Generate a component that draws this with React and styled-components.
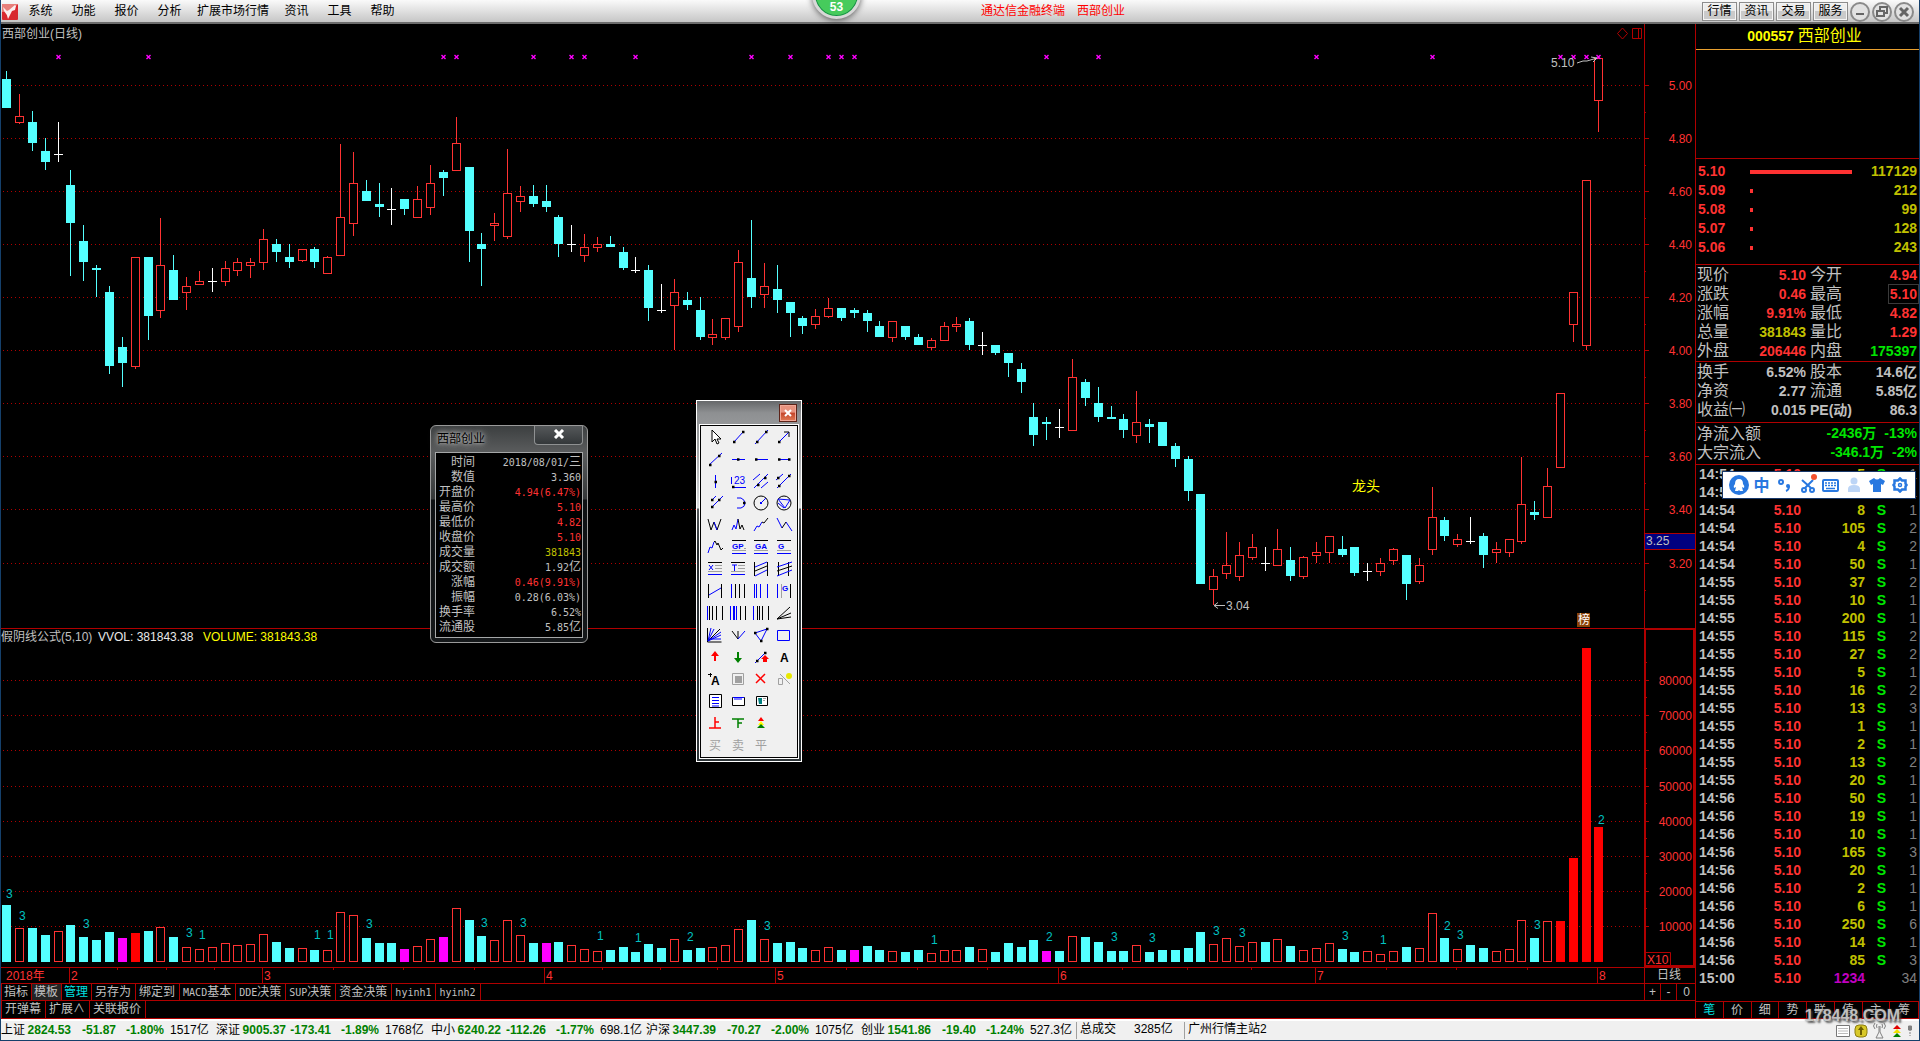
import React from 'react'
import styled, { createGlobalStyle } from 'styled-components';

const RED = '#ff3232';
const LINE = '#b00000';
const CYAN = '#54ffff';
const GREY = '#c0c0c0';

const GlobalStyle = createGlobalStyle`
    body {
        margin: 0;
        background: #000;
        color: #c0c0c0;
        font-family: "Liberation Sans", "Noto Sans CJK SC", sans-serif;
        font-size: 12px;
        line-height: 15px;
        overflow: hidden;
    }

    * {
        box-sizing: border-box;
    }

    button {
        font: inherit;
        color: inherit;
        padding: 0;
        border: 0;
        background: none;
        white-space: nowrap;
    }

    table {
        border-collapse: collapse;
        table-layout: fixed;
        width: 100%;
    }

    td, th {
        padding: 0;
        font-weight: inherit;
        white-space: nowrap;
    }
`;

const Screen = styled.div`
    position: relative;
    min-height: 100vh;
    display: flex;
    flex-direction: column;
    border: solid #15406b;
    border-width: 0 1px 1px;
`;

/* ---------- top bar ---------- */

const TopBar = styled.header`
    position: relative;
    display: flex;
    align-items: center;
    height: 24px;
    padding-top: 1px;
    color: #000;
    background: linear-gradient(#fafafa, #c6c6c6);
    border-bottom: 2px solid #6c6c6c;
`;

const Logo = styled.svg`
    width: 16px;
    height: 16px;
    margin: 0 1px;
`;

const Menu = styled.nav`
    display: flex;
`;

const MenuItem = styled.button`
    min-width: 43px;
    padding: 0 6px;
    height: 20px;
`;

const Caption = styled.div`
    display: flex;
    justify-content: center;
    gap: 12px;
    flex: 1;
    color: #f00;
`;

const TopButtons = styled.div`
    display: flex;
    align-items: center;
    gap: 2px;
    padding-right: 5px;
`;

const TopButton = styled.button`
    width: 35px;
    height: 19px;
    border: 1px solid #8c8c8c;
    box-shadow: inset 0 0 0 1px #f4f4f4;
    background: linear-gradient(#ededed 50%, #cacaca 50%);
`;

const RoundButton = styled.button`
    width: 20px;
    height: 20px;
    display: flex;
    border-radius: 50%;
    border: 2px solid #8a8a8a;
    background: #e2e2e2;
`;

const Badge = styled.div`
    position: absolute;
    left: 811px;
    top: -30px;
    width: 49px;
    height: 49px;
    padding-top: 28px;
    border-radius: 50%;
    border: 3px solid #d8d8d8;
    background: #46cb5c;
    box-shadow: inset 0 0 0 1px #178a48, 0 1px 6px rgba(0, 0, 0, .6);
    color: #fff;
    font-weight: bold;
    line-height: 13px;
    text-align: center;
`;

/* ---------- chart side ---------- */

const Main = styled.main`
    display: flex;
`;

const ChartSide = styled.section`
    flex: 1;
    min-width: 0;
`;

const ChartRow = styled.div`
    display: flex;
    height: ${props => props.$height}px;
    border-bottom: 1px solid ${LINE};
`;

const Plot = styled.svg`
    flex: 1;
    min-width: 0;
    height: 100%;
    display: block;
    font-size: 12px;
`;

const Axis = styled.svg`
    width: 51px;
    height: 100%;
    display: block;
    font-size: 12px;
`;

const Period = styled.div`
    width: 51px;
    padding-left: 12px;
    border-left: 1px solid ${LINE};
`;

const Tabs = styled.div`
    display: flex;
    flex: 1;
`;

const Tab = styled.button`
    display: flex;
    align-items: center;
    justify-content: center;
    padding: 0 ${props => props.$tight ? '3px 0 2px' : '4px 0 3px'};
    border-right: 1px solid ${LINE};
    color: ${props => props.$active ? '#00e0e0' : GREY};
    background: ${props => props.$pressed ? '#242424' : 'none'};

    &:first-child {
        border-left: 1px solid ${LINE};
    }
`;

const Half = styled.span`
    font-family: "DejaVu Sans Mono", monospace;
    font-size: 10px;
`;

const Zoomers = styled.div`
    display: grid;
    grid-template-columns: 16px 16px 19px;
    border-left: 1px solid ${LINE};
    width: 51px;
`;

const ZoomButton = styled.button`
    &:not(:last-child) {
        border-right: 1px solid ${LINE};
    }
`;

/* ---------- quote side ---------- */

const QuoteSide = styled.aside`
    width: 224px;
    display: flex;
    flex-direction: column;
    border-left: 1px solid ${LINE};
    font-size: 14px;
    font-weight: bold;
    line-height: 19px;
`;

const StockTitle = styled.h1`
    margin: 0;
    height: 26px;
    padding-right: 6px;
    border-bottom: 1px solid #e8a030;
    color: #ff0;
    text-align: center;
    font-size: 14px;
    line-height: 25px;
`;

const Name = styled.span`
    font-size: 16px;
    font-weight: normal;
    line-height: 16px;
    color: ${props => props.$color || GREY};
`;

const Block = styled.div`
    height: ${props => props.$height}px;
    padding: ${props => props.$top || 1}px 2px 0 1px;
    border-bottom: 1px solid ${LINE};
`;

const Row = styled.tr`
    height: ${props => props.$height || 19}px;
    line-height: ${props => props.$height || 19}px;
`;

const Cell = styled.td`
    color: ${props => props.$color || GREY};
    text-align: ${props => props.$left ? 'left' : 'right'};
    padding-left: ${props => props.$pad || 0}px;
    font-weight: ${props => props.$thin ? 'normal' : 'inherit'};
`;

const Depth = styled.div`
    height: 4px;
    background: ${RED};
`;

const Boxed = styled.span`
    outline: 1px solid #3a3a3a;
    outline-offset: 1px;
`;

const Flow = styled.div`
    display: flex;
    gap: 8px;
    height: 19px;
    color: #00e600;
`;

const FlowName = styled(Name)`
    flex: 1;
    line-height: 19px;
`;

const TickList = styled.div`
    flex: 1;
    padding: 0 2px 0 3px;
`;

const SideTabs = styled.div`
    display: grid;
    grid-template-columns: repeat(8, 1fr);
    height: 18px;
    border: solid ${LINE};
    border-width: 1px 1px 1px 0;
    font-size: 12px;
    font-weight: normal;
    line-height: 16px;
`;

const SideTab = styled.button`
    color: ${props => props.$active ? '#00e0e0' : GREY};

    &:not(:last-child) {
        border-right: 1px solid ${LINE};
    }
`;

/* ---------- status bar ---------- */

const StatusBar = styled.footer`
    display: flex;
    align-items: center;
    flex: 1;
    min-height: 21px;
    color: #000;
    background: #f0f0f0;
    border-top: 2px solid #fff;
`;

const IndexQuote = styled.div`
    display: grid;
    grid-template-columns: 25px 45px 45px 48px 52px;
`;

const Fall = styled.b`
    color: #008000;
    text-align: right;
`;

const Amount = styled.span`
    padding-left: 6px;
`;

const StatusCell = styled.div`
    display: flex;
    gap: 18px;
    height: 17px;
    width: ${props => props.$width}px;
    padding-left: 3px;
    border-left: 1px solid #a0a0a0;
    white-space: nowrap;
`;

const StatusIcons = styled.svg`
    width: 84px;
    height: 18px;
    margin-left: auto;
`;

const Watermark = styled.div`
    position: absolute;
    right: 19px;
    bottom: 14px;
    color: rgba(215, 215, 215, .85);
    font-size: 16px;
    font-weight: bold;
    line-height: 20px;
    text-shadow: 2px 2px 2px rgba(60, 60, 60, .8), 0 0 2px #555;
`;

/* ---------- floating windows ---------- */

const InfoWindow = styled.section`
    position: absolute;
    left: 429px;
    top: 425px;
    width: 158px;
    padding: 0 4px 4px;
    border: 1px solid #9a9a9a;
    border-radius: 6px;
    background: linear-gradient(#3c3f40, #5a5c5d 26px, #353839 73px, #0e1113 74px, #15181a);
`;

const InfoHead = styled.div`
    display: flex;
    justify-content: space-between;
    height: 26px;
    color: #000;
`;

const InfoTitle = styled.span`
    padding: 6px 2px;
    text-shadow: 0 0 3px #aaa, 0 0 5px #aaa, 0 0 8px #999, 0 0 10px #888;
`;

const InfoClose = styled.button`
    width: 49px;
    height: 19px;
    border: 1px solid #8f9192;
    border-top: 0;
    border-radius: 0 0 4px 4px;
    background: linear-gradient(#55585a, #34383a);
`;

const InfoBody = styled.div`
    padding: 2px 1px 2px 2px;
    border: 1px solid #a5a7a8;
    background: #000;
`;

const Tools = styled.section`
    position: absolute;
    left: 695px;
    top: 400px;
    width: 106px;
    padding: 0 3px 3px;
    border: 1px solid #fff;
    background: linear-gradient(#66686a, #8e9092 12px, #a3a5a7 50px, #dadcde 107px, #55595c 108px, #2c3236 150px, #2f3639);
`;

const ToolsHead = styled.div`
    display: flex;
    justify-content: flex-end;
    height: 24px;
    padding: 3px 1px 0 0;
`;

const ToolsClose = styled.button`
    width: 18px;
    height: 18px;
    display: flex;
    align-items: center;
    justify-content: center;
    border: 1px solid #5c2318;
    box-shadow: inset 0 0 0 1px #f0a898;
    background: linear-gradient(#e8927e 45%, #c4452a 50%, #e07a55);
`;

const ToolGrid = styled.div`
    display: grid;
    grid-template-columns: repeat(4, 23px);
    grid-auto-rows: 22px;
    padding: 0 0 1px 3px;
    border: 1px solid #000;
    outline: 1px solid #fff;
    background: #f0f0f0;
`;

const Tool = styled.button`
    display: flex;
`;

const ImeBar = styled.section`
    position: absolute;
    right: 3px;
    top: 471px;
    display: flex;
    align-items: center;
    height: 28px;
    padding: 0 4px;
    border: 1px solid #17386b;
    background: #fff;
`;

const ImeButton = styled.button`
    width: 23px;
    height: 22px;
    display: flex;
    align-items: center;
    justify-content: center;
    color: #2878e0;
    font-size: 16px;
    font-weight: bold;
`;

/* kind, high, body top, body bottom, low, volume kind, volume top
   kinds: c down, r up, w flat, m magenta, f solid red */
const DAYS = `c 71 79 108 108 c 905
r 94 116 123 124 r 928
c 111 122 143 151 c 928
c 138 151 162 170 c 935
w 122 154 155 162 r 931
c 170 185 223 276 c 925
c 225 241 262 281 c 937
c 265 268 270 297 c 940
c 286 292 366 374 c 932
c 337 347 363 387 m 938
r 257 257 367 369 f 933
c 257 257 316 340 c 931
r 218 265 311 318 r 927
c 255 270 300 300 c 937
r 277 286 293 310 r 947
r 271 281 285 285 r 949
w 268 281 282 292 r 947
r 261 268 282 286 r 943
r 258 262 271 276 r 945
r 258 262 266 278 r 944
r 229 239 263 270 r 934
c 239 244 252 262 c 942
c 244 257 262 268 c 948
r 249 249 261 262 r 948
c 247 249 262 268 c 950
r 256 257 274 274 r 950
r 144 217 256 256 r 912
r 152 183 224 236 r 915
c 180 191 201 201 c 938
c 183 204 207 217 c 943
w 188 209 210 225 c 943
c 199 199 209 215 m 949
r 186 199 218 218 r 946
r 165 183 208 215 r 939
c 170 172 178 196 m 937
r 117 143 171 171 r 908
c 167 167 231 262 c 920
c 233 244 249 286 c 936
r 213 223 226 241 r 940
r 149 193 237 239 r 920
r 186 196 202 212 r 935
c 185 196 204 207 c 943
c 185 201 207 212 m 943
c 215 217 244 257 c 942
w 225 244 245 252 r 945
r 234 247 256 262 r 949
r 237 244 248 252 r 951
c 236 244 247 247 c 950
c 247 252 268 270 c 947
w 257 270 271 273 c 952
c 265 270 308 321 c 944
w 284 310 311 313 c 948
r 279 292 306 350 r 939
c 292 300 305 310 c 950
c 297 310 337 340 c 948
r 319 334 338 345 r 947
r 318 318 338 340 r 945
r 250 262 327 332 r 929
c 220 278 297 308 c 920
r 263 286 295 308 r 939
c 265 289 300 313 c 943
c 302 302 313 337 c 942
c 316 318 326 334 c 948
r 309 316 325 329 r 950
r 298 308 317 318 r 947
c 308 308 318 321 c 950
c 308 310 313 318 m 950
c 310 313 321 332 c 946
c 321 326 337 337 c 950
r 321 321 338 342 r 951
c 326 326 337 340 c 952
c 334 337 345 345 c 950
r 338 340 348 350 r 953
r 322 326 341 341 r 950
r 317 324 327 332 r 950
c 318 321 345 350 c 947
w 332 345 346 355 r 949
c 345 345 353 355 c 952
c 353 353 363 377 c 943
c 363 369 382 393 c 947
c 403 417 435 446 c 940
c 417 422 424 440 m 951
w 409 427 428 438 c 951
r 359 377 431 431 r 936
c 379 382 398 406 c 937
c 387 403 417 422 c 942
c 406 417 419 419 c 951
c 414 419 430 438 c 951
r 391 422 436 443 r 945
c 419 424 427 443 c 952
c 422 422 446 446 c 950
c 443 446 459 467 c 950
c 456 459 491 501 c 948
c 494 494 584 584 c 932
r 569 576 590 605 r 944
r 532 565 574 579 r 938
r 542 555 577 581 r 946
r 534 547 558 560 r 942
w 547 563 564 571 c 942
r 529 549 566 566 r 939
c 547 560 576 581 c 946
r 556 557 577 579 r 950
r 542 552 556 563 r 948
r 536 536 553 563 r 943
c 536 549 555 557 c 949
c 547 547 573 576 c 952
w 563 571 572 581 r 951
r 558 563 572 576 r 954
r 548 549 561 565 r 951
c 555 555 584 600 c 947
r 558 565 582 584 r 948
r 487 517 550 555 r 913
c 517 520 536 541 c 938
r 534 539 545 547 r 949
w 517 541 542 544 c 945
c 533 536 555 568 c 948
r 542 549 553 563 r 951
r 539 539 553 557 r 949
r 457 504 542 544 r 920
c 501 512 515 520 c 938
r 468 486 518 518 r 921
r 393 393 468 468 f 921
r 292 292 325 342 f 858
r 180 180 346 350 f 648
r 58 58 101 132 f 827`.split('\n').map(line => {
    const [kind, high, top, bottom, low, volKind, volTop] = line.split(' ');
    return { kind, high: +high, top: +top, bottom: +bottom, low: +low, volKind, volTop: +volTop };
});

const dayX = i => Math.floor(6.78 + 12.84 * i);

const MARKED = [4, 11, 34, 35, 41, 44, 45, 49, 58, 61, 64, 65, 66, 81, 85, 102, 111, 121, 122, 123, 124];

const COUNTS = [
    [0, 3, 894], [1, 3, 916], [6, 3, 924], [14, 3, 933], [15, 1, 935], [24, 1, 935], [25, 1, 935],
    [28, 3, 924], [37, 3, 923], [40, 3, 923], [46, 1, 936], [49, 1, 938], [53, 2, 937], [59, 3, 926],
    [72, 1, 940], [81, 2, 937], [86, 3, 937], [89, 3, 938], [94, 3, 931], [96, 3, 933], [104, 3, 936],
    [107, 1, 940], [112, 2, 926], [113, 3, 935], [119, 3, 925], [124, 2, 820],
];

const PRICES = [
    ['5.00', 85], ['4.80', 138], ['4.60', 191], ['4.40', 244], ['4.20', 297],
    ['4.00', 350], ['3.80', 403], ['3.60', 456], ['3.40', 509], ['3.20', 563],
];

const VOLUMES = [
    ['80000', 680], ['70000', 715], ['60000', 750], ['50000', 786],
    ['40000', 821], ['30000', 856], ['20000', 891], ['10000', 926],
];

const MONTHS = [['2', 69], ['3', 262], ['4', 544], ['5', 775], ['6', 1058], ['7', 1315], ['8', 1597]];
const WEEKS = [117, 166, 214, 333, 403, 474, 602, 660, 717, 846, 917, 987, 1122, 1187, 1251, 1386, 1456, 1527];

const FILL = { c: CYAN, r: RED, w: '#fff', m: '#f0f', f: '#f00' };

function Candle({ day, x }) {
    const color = FILL[day.kind];
    if (day.kind === 'r') {
        return (
            <g>
                <rect x={x} y={day.high} width="1" height={day.top - day.high} fill={color} />
                <rect x={x} y={day.bottom} width="1" height={day.low - day.bottom} fill={color} />
                <rect x={x - 3.5} y={day.top + .5} width="8" height={day.bottom - day.top - 1} fill="#000" stroke={color} />
            </g>
        )
    }
    return (
        <g fill={color}>
            <rect x={x} y={day.high} width="1" height={day.low - day.high} />
            <rect x={x - 4} y={day.top} width="9" height={day.bottom - day.top} />
        </g>
    )
}

function Grid({ levels }) {
    return levels.map(([label, y]) => (
        <line key={label} x1="3" x2="100%" y1={y + .5} y2={y + .5} stroke={LINE} strokeDasharray="1 3" />
    ))
}

function PricePlot() {
    return (
        <Plot>
            <g transform="translate(-1 -24)">
                <g shapeRendering="crispEdges">
                    <Grid levels={PRICES} />
                    {DAYS.map((day, i) => <Candle key={i} day={day} x={dayX(i)} />)}
                </g>
                {MARKED.map(i => (
                    <path key={i} d={`M${dayX(i) - 1.5} 55l4 4m0-4l-4 4`} stroke="#f0f" strokeWidth="1.4" />
                ))}
                <path d="M1622.500 28l5 5.500l-5 5.500l-5-5.500zM1632.500 28.500h9v10h-9zM1638.500 28v10" fill="none" stroke={LINE} />
                <path d="M1577 63l6-2h4l10-3m-6-1l6 1l-4 4" fill="none" stroke={GREY} />
                <path d="M1225 605.500h-11m4-3l-4 3l4 3" fill="none" stroke={GREY} />
                <rect x="1577" y="613" width="13" height="14" fill="#8a4208" />
                <g fill={GREY}>
                    <text x="2" y="38">西部创业(日线)</text>
                    <text x="1551" y="67">5.10</text>
                    <text x="1226" y="610">3.04</text>
                    <text x="1352" y="491" fontSize="14" fill="#ff0">龙头</text>
                    <text x="1578" y="624" fill="#fff">榜</text>
                </g>
            </g>
        </Plot>
    )
}

function PriceAxis() {
    return (
        <Axis>
            <g transform="translate(0 -24)">
                <path d="M.5 24v610" stroke={LINE} />
                {PRICES.map(([label, y]) => (
                    <g key={label}>
                        <path d={`M0 ${y + .5}h5M0 ${y + 27.5}h2`} stroke={LINE} />
                        <text x="48" y={y + 5} textAnchor="end" fill={RED}>{label}</text>
                    </g>
                ))}
                <rect x=".5" y="533.500" width="51" height="16" fill="#000080" stroke={LINE} />
                <text x="2" y="545" fill={GREY}>3.25</text>
            </g>
        </Axis>
    )
}

function VolumePlot() {
    return (
        <Plot>
            <g transform="translate(-1 -629)">
                <g shapeRendering="crispEdges">
                    <Grid levels={VOLUMES} />
                    {DAYS.map((day, i) => day.volKind === 'r'
                        ? <rect key={i} x={dayX(i) - 3.5} y={day.volTop + .5} width="8" height={961 - day.volTop} fill="#000" stroke={RED} />
                        : <rect key={i} x={dayX(i) - 4} y={day.volTop} width="9" height={962 - day.volTop} fill={FILL[day.volKind]} />
                    )}
                </g>
                {COUNTS.map(([i, count, y]) => (
                    <text key={i} x={dayX(i)} y={y + 4} fill="#00c0c0">{count}</text>
                ))}
                <text x="1" y="641" fill={GREY}>假阴线公式(5,10)</text>
                <text x="98" y="641" fill="#e8e8e8">VVOL: 381843.38</text>
                <text x="203" y="641" fill="#ff0">VOLUME: 381843.38</text>
            </g>
        </Plot>
    )
}

function VolumeAxis() {
    return (
        <Axis>
            <g transform="translate(0 -629)">
                <rect x="1" y="629" width="49" height="337" fill="none" stroke={LINE} strokeWidth="2" />
                {VOLUMES.map(([label, y]) => (
                    <g key={label}>
                        <path d={`M0 ${y + .5}h5M0 ${y - 17.5}h3`} stroke={LINE} />
                        <text x="48" y={y + 5} textAnchor="end" fill={RED}>{label}</text>
                    </g>
                ))}
                <path d="M1 952.500h25.500v14" fill="none" stroke={LINE} />
                <text x="3" y="964" fill={RED}>X10</text>
            </g>
        </Axis>
    )
}

function DateAxis() {
    return (
        <Plot>
            <g transform="translate(-1 0)">
                {WEEKS.map(x => <path key={x} d={`M${x + .5} 0v2`} stroke={LINE} />)}
                {MONTHS.map(([month, x]) => (
                    <g key={month}>
                        <path d={`M${x + .5} 0v16`} stroke={LINE} />
                        <text x={x + 2} y="12" fill={RED}>{month}</text>
                    </g>
                ))}
                <text x="6" y="12" fill={RED}>2018年</text>
            </g>
        </Plot>
    )
}

const TEMPLATES = [
    ['', '指标'], ['', '模板'], ['', '管理'], ['', '另存为'], ['', '绑定到'], ['MACD', '基本'],
    ['DDE', '决策'], ['SUP', '决策'], ['', '资金决策'], ['hyinh1', ''], ['hyinh2', ''],
];

function Charts() {
    return (
        <ChartSide>
            <ChartRow $height={605}><PricePlot /><PriceAxis /></ChartRow>
            <ChartRow $height={339}><VolumePlot /><VolumeAxis /></ChartRow>
            <ChartRow $height={16}><DateAxis /><Period>日线</Period></ChartRow>
            <ChartRow $height={17}>
                <Tabs>
                    {TEMPLATES.map(([latin, name]) => (
                        <Tab key={latin + name} $tight={name.length === 2 && !latin} $active={name === '管理'} $pressed={name === '模板'}>
                            {latin && <Half>{latin}</Half>}{name}
                        </Tab>
                    ))}
                </Tabs>
                <Zoomers>
                    <ZoomButton>+</ZoomButton>
                    <ZoomButton>-</ZoomButton>
                    <ZoomButton>0</ZoomButton>
                </Zoomers>
            </ChartRow>
            <ChartRow $height={18}>
                <Tabs>
                    <Tab>开弹幕</Tab>
                    <Tab>扩展∧</Tab>
                    <Tab>关联报价</Tab>
                </Tabs>
            </ChartRow>
        </ChartSide>
    )
}

const YELLOW = '#c0c000';
const GREEN = '#00e600';

const BIDS = [['5.10', 102, 117129], ['5.09', 3, 212], ['5.08', 3, 99], ['5.07', 3, 128], ['5.06', 3, 243]];

const QUOTES = [
    ['现价', '5.10', RED, '今开', '4.94', RED],
    ['涨跌', '0.46', RED, '最高', '5.10', RED],
    ['涨幅', '9.91%', RED, '最低', '4.82', RED],
    ['总量', '381843', YELLOW, '量比', '1.29', RED],
    ['外盘', '206446', RED, '内盘', '175397', GREEN],
];

const BASICS = [
    ['换手', '6.52%', GREY, '股本', '14.6亿', GREY],
    ['净资', '2.77', GREY, '流通', '5.85亿', GREY],
    ['收益㈠', '0.015', GREY, 'PE(动)', '86.3', GREY],
];

const TICKS = `14:54 5 1
14:54 50 1
14:54 8 1
14:54 105 2
14:54 4 2
14:54 50 1
14:55 37 2
14:55 10 1
14:55 200 1
14:55 115 2
14:55 27 2
14:55 5 1
14:55 16 2
14:55 13 3
14:55 1 1
14:55 2 1
14:55 13 2
14:55 20 1
14:56 50 1
14:56 19 1
14:56 10 1
14:56 165 3
14:56 20 1
14:56 2 1
14:56 6 1
14:56 250 6
14:56 14 1
14:56 85 3
15:00 1234 34`.split('\n').map(line => line.split(' '));

function QuoteTable({ rows }) {
    return (
        <table>
            <colgroup>
                <col width="50" /><col width="59" /><col width="56" /><col />
            </colgroup>
            <tbody>
                {rows.map(([name, value, color, name2, value2, color2]) => (
                    <Row key={name}>
                        <Cell $left><Name>{name}</Name></Cell>
                        <Cell $color={color}>{value}</Cell>
                        <Cell $left $pad={4}>{name2 === 'PE(动)' ? name2 : <Name>{name2}</Name>}</Cell>
                        <Cell $color={color2}>{name2 === '最高' ? <Boxed>{value2}</Boxed> : value2}</Cell>
                    </Row>
                ))}
            </tbody>
        </table>
    )
}

function Quotes() {
    return (
        <QuoteSide>
            <StockTitle>000557 <Name $color="#ff0">西部创业</Name></StockTitle>
            <Block $height={109} />
            <Block $height={106} $top={3}>
                <table>
                    <colgroup>
                        <col width="53" /><col width="103" /><col />
                    </colgroup>
                    <tbody>
                        {BIDS.map(([price, width, volume]) => (
                            <Row key={price}>
                                <Cell $left $pad={1} $color={RED}>{price}</Cell>
                                <td><Depth style={{ width }} /></td>
                                <Cell $color={YELLOW}>{volume}</Cell>
                            </Row>
                        ))}
                    </tbody>
                </table>
            </Block>
            <Block $height={97}><QuoteTable rows={QUOTES} /></Block>
            <Block $height={61}><QuoteTable rows={BASICS} /></Block>
            <Block $height={42}>
                <Flow><FlowName>净流入额</FlowName><span>-2436万</span><span>-13%</span></Flow>
                <Flow><FlowName>大宗流入</FlowName><span>-346.1万</span><span>-2%</span></Flow>
            </Block>
            <TickList>
                <table>
                    <colgroup>
                        <col width="60" /><col width="42" /><col width="64" /><col width="21" /><col />
                    </colgroup>
                    <tbody>
                        {TICKS.map(([time, volume, count], i) => (
                            <Row key={i} $height={18}>
                                <Cell $left>{time}</Cell>
                                <Cell $color={RED}>5.10</Cell>
                                <Cell $color={time === '15:00' ? '#c000c0' : YELLOW}>{volume}</Cell>
                                <Cell $color={GREEN}>{time === '15:00' ? '' : 'S'}</Cell>
                                <Cell $thin $color="#808080">{count}</Cell>
                            </Row>
                        ))}
                    </tbody>
                </table>
            </TickList>
            <SideTabs>
                {[...'笔价细势联值主筹'].map(name => <SideTab key={name} $active={name === '笔'}>{name}</SideTab>)}
            </SideTabs>
        </QuoteSide>
    )
}

const INFO = [
    ['时间', '2018/08/01/', '三', GREY],
    ['数值', '3.360', '', GREY],
    ['开盘价', '4.94(6.47%)', '', RED],
    ['最高价', '5.10', '', RED],
    ['最低价', '4.82', '', RED],
    ['收盘价', '5.10', '', RED],
    ['成交量', '381843', '', YELLOW],
    ['成交额', '1.92', '亿', GREY],
    ['涨幅', '0.46(9.91%)', '', RED],
    ['振幅', '0.28(6.03%)', '', GREY],
    ['换手率', '6.52%', '', GREY],
    ['流通股', '5.85', '亿', GREY],
];

function Info() {
    return (
        <InfoWindow>
            <InfoHead>
                <InfoTitle>西部创业</InfoTitle>
                <InfoClose aria-label="关闭">
                    <svg width="12" height="10" viewBox="0 0 12 10"><path d="M2 1l8 8M10 1L2 9" stroke="#fff" strokeWidth="3" /></svg>
                </InfoClose>
            </InfoHead>
            <InfoBody>
                <table>
                    <colgroup><col width="37" /><col /></colgroup>
                    <tbody>
                        {INFO.map(([name, value, unit, color]) => (
                            <Row key={name} $height={15}>
                                <Cell>{name}</Cell>
                                <Cell $color={color}><Half>{value}</Half>{unit}</Cell>
                            </Row>
                        ))}
                    </tbody>
                </table>
            </InfoBody>
        </InfoWindow>
    )
}

const B = '#0000ff';
const K = '#000';
const G = '#a0a0a0';

/* each icon: [stroke, path, fill, width], drawn round its centre */
const dots = (...points) => [K, points.map(([x, y]) => `M${x - 1} ${y}h2.500`).join(''), 'none', 2.5];
const caps = (label, color = B, x = -6, y = 2, size = 8) => ({ label, color, x, y, size });

const ICONS = [
    [[K, 'M-3-7v12l3-3l2 5l2-1l-2-4h4z', '#fff']],
    [[B, 'M-4 5L5-5'], dots([-4, 5], [5, -5])],
    [[B, 'M-6 7L7-7'], dots([-4, 5], [5, -5])],
    [[B, 'M-5 5L5-5'], [K, 'M0-5h5v5'], dots([-5, 5])],

    [[B, 'M-6 6L7-6'], dots([-5, 6], [4, -3])],
    [[B, 'M-6 .5h13'], dots([0, .5])],
    [[B, 'M-6 .5h13'], dots([-5, .5])],
    [[B, 'M-6 .5h12'], dots([-5, .5], [5, .5])],

    [[B, 'M.5-6v13'], dots([.5, 1])],
    [[B, 'M-6 6.500h14M-6.500-4v7'], caps('23', B, -4, 3, 10), dots([-5, 6])],
    [[B, 'M-8-1l7-6M-7 7L7-7M0 7l7-6'], dots([-3, 4], [4, -3])],
    [[B, 'M-8-1l7-6M-7 7L7-7'], dots([-5, 5], [5, -5], [-6, -3])],

    [[B, 'M-4-2l5-5M-4 5L8-7'], dots([-3, -3], [-3, 4], [4, -3])],
    [[B, 'M-1-5h4q4 2 4 5q0 4-4 5h-4'], dots([6, 0])],
    [[K, 'M-7 0a7 7 0 1 0 14 0a7 7 0 1 0-14 0'], [B, 'M0 0l5-5'], [B, 'M-1 0h2', 'none', 2]],
    [[K, 'M-7 0a7 7 0 1 0 14 0a7 7 0 1 0-14 0'], [B, 'M-6-4L6-3L1 5z'], [B, 'M-6 0l6 5']],

    [[K, 'M-7-6l3 11l3-8l3 8l4-11'], [B, 'M-1-3l3 8']],
    [[B, 'M-6 5l2-5l2 4l2-10'], [K, 'M0-6l2 10l2-4l2 5']],
    [[B, 'M-7 6l3-5l2 1l3-5'], [K, 'M1-3l2 1l4-5']],
    [[B, 'M-7-7l5 10M2-3l6 9'], [K, 'M-2 3l4-6']],

    [[B, 'M-7 6l2-6l2 1l2-6'], [K, 'M-1-5l1-1l2 4l1-2l3 7l2-2']],
    [[K, 'M-6-6.500h14'], [G, 'M6 1.500h2M-6 3.500h14'], [B, 'M-6 6.500h14'], caps('GP')],
    [[K, 'M-7-6.500h14'], [G, 'M-7 3.500h14'], [B, 'M-7 6.500h14'], caps('GA')],
    [[K, 'M-7-6.500h14'], [G, 'M-7 3.500h14'], [B, 'M-7 6.500h14'], caps('G')],

    [[K, 'M-7-6.500h14'], [G, 'M0-3.500h7M0-.5h7M-7 2.500h14'], [B, 'M-7 5.500h14M-6-4l4 5m0-5l-4 5']],
    [[K, 'M-7-6.500h14'], [G, 'M0-3.500h7M0-.5h7M-7 2.500h14'], [B, 'M-7 5.500h14M-6-4h5M-3.500-4v6']],
    [[K, 'M-6.500-7v14M6.500-7v14'], [B, 'M-6-2L6-7M-6 7L6 1'], [K, 'M-6 2L6-3']],
    [[K, 'M-5.500-7v14M4.500-7v14'], [B, 'M-7-2L8-7M-7 7L8 1'], [K, 'M-7 2L8-3']],

    [[K, 'M-6.500-7v14M6.500-7v14'], [B, 'M-6 4L6-3']],
    [[B, 'M-6.500-7v14'], [K, 'M-2.500-7v14M1.500-7v14M6.500-7v14']],
    [[B, 'M-6.500-7v14M-4.500-7v14M-.5-7v14M6.500-7v14']],
    [[B, 'M-6.500-7v14'], caps('G', B, -2, 0), [G, 'M-2.500-7v14'], [K, 'M6.500-7v14']],

    [[B, 'M-7.500-7v14'], [K, 'M-5.500-7v14M-2.500-7v14M1.500-7v14M7.500-7v14']],
    [[B, 'M-7.500-7v14M-4.500-7v14M-3.500-7v14M-1.500-7v14'], [K, 'M2.500-7v14M7.500-7v14']],
    [[B, 'M-7.500-7v14'], [K, 'M-3.500-7v14M-1.500-7v14M1.500-7v14M7.500-7v14']],
    [[K, 'M-7 6L6-6M-7 6L7 0M-7 6L7 4']],

    [[K, 'M-7.500-7v14h14M-7 6L5-6'], [B, 'M-7 6L-4-7M-7 6L-1-6M-7 6L6-3M-7 6L6 0M-5 4h11']],
    [[K, 'M-6-4l6 8v-8'], [B, 'M0 4l7-8']],
    [[B, 'M-6-2L6-6L0 6z'], dots([-6, -2], [6, -6], [0, 6])],
    [[B, 'M-6.500-4.500h12v10h-12z']],

    [['none', 'M0-6l4 5h-3v5h-2v-5h-3z', '#f00']],
    [['none', 'M0 6l4-5h-3v-6h-2v6h-3z', '#008000']],
    [[B, 'M-6 6L5-5'], dots([-4, 4], [4, -4]), ['none', 'M4-2l4 4h-2v3h-4v-3h-2z', '#f00']],
    [caps('A', K, -4, 5, 12)],

    [caps('A', K, -4, 6, 12), [K, 'M-7-4.500h4M-4.500-6v4']],
    [[G, 'M-5.500-5.500h11v11h-11z'], ['none', 'M-3-3h7v7h-7z', G]],
    [['#f00', 'M-5-5l9 9M4-5l-9 9', 'none', 1.5]],
    [[G, 'M-5.500-.5h4v6h-4zM-4-5L6 5'], ['none', 'M2-3a3 3 0 1 0 6 0a3 3 0 1 0-6 0', '#e8e800']],

    [[K, 'M-5.500-6.500h12v13h-12z', '#fff'], [B, 'M-3-3.500h7M-3-.5h7M-3 2.500h7M-3 5h7']],
    [[K, 'M-5.500-3.500h12v8h-12z', '#fff'], [B, 'M-5-3.500h11M-3-3v2M-1-3v2M1-3v2M3-3v2']],
    [[K, 'M-4.500-4.500h11v9h-11z', '#fff'], ['none', 'M-3-3h4v6h-3z', '#008080'], [G, 'M2-2.500h3M2-.5h2']],
    [],

    [['#f00', 'M-6 5h12M0-6v11M0-1h4', 'none', 1.5]],
    [['#008000', 'M-6-4h12M0-4v9M0 0h4', 'none', 1.5]],
    [['none', 'M0-6l3 4h-6z', '#f00'], ['none', 'M0-2l3 4h-6z', '#ff0'], ['none', 'M0 1l4 4h-8z', '#008000']],
    [],
];

function ToolIcon({ parts }) {
    return (
        <svg width="23" height="22" viewBox="-11 -11 23 22" fill="none">
            {parts.map((part, i) => part.label
                ? <text key={i} x={part.x} y={part.y} fill={part.color} fontSize={part.size} fontWeight={part.size === 10 ? 'normal' : 'bold'}>{part.label}</text>
                : <path key={i} stroke={part[0]} d={part[1]} fill={part[2] || 'none'} strokeWidth={part[3] || 1} />
            )}
        </svg>
    )
}

function DrawingTools() {
    return (
        <Tools>
            <ToolsHead>
                <ToolsClose aria-label="关闭">
                    <svg width="8" height="8" viewBox="0 0 8 8"><path d="M1 1l6 6M7 1L1 7" stroke="#fff" strokeWidth="2" /></svg>
                </ToolsClose>
            </ToolsHead>
            <ToolGrid>
                {ICONS.map((parts, i) => <Tool key={i}><ToolIcon parts={parts} /></Tool>)}
                {[...'买卖平'].map(name => (
                    <Tool key={name}>
                        <svg width="23" height="22" viewBox="-11 -11 23 22">
                            <text x="-6" y="5" fontSize="12" fill={G}>{name}</text>
                        </svg>
                    </Tool>
                ))}
            </ToolGrid>
        </Tools>
    )
}

function Ime() {
    return (
        <ImeBar>
            <ImeButton>
                <svg width="20" height="20" viewBox="0 0 20 20">
                    <circle cx="10" cy="10" r="10" fill="currentColor" />
                    <path d="M10 4q4 0 4 5q2 2 1 4l-2-1l1 4h-3l-1-1l-1 1h-3l1-4l-2 1q-1-2 1-4q0-5 4-5z" fill="#fff" />
                </svg>
            </ImeButton>
            <ImeButton>中</ImeButton>
            <ImeButton>
                <svg width="14" height="14" viewBox="0 0 14 14" fill="none" stroke="currentColor" strokeWidth="2">
                    <circle cx="3" cy="4" r="2" />
                    <circle cx="10" cy="8" r="2" fill="currentColor" stroke="none" />
                    <path d="M8 13q3-1 3-5" />
                </svg>
            </ImeButton>
            <ImeButton>
                <svg width="20" height="22" viewBox="0 0 20 22" fill="none" stroke="currentColor" strokeWidth="2">
                    <circle cx="6" cy="16" r="2" /><circle cx="14" cy="16" r="2" />
                    <path d="M4 6l9 8M15 6l-8 8" />
                    <circle cx="16" cy="3" r="3" fill="#f4512c" stroke="none" />
                </svg>
            </ImeButton>
            <ImeButton>
                <svg width="17" height="13" viewBox="0 0 17 13" fill="none" stroke="currentColor">
                    <rect x="1" y="1" width="15" height="11" rx="1" strokeWidth="2" />
                    <path d="M3 4h11M3 6.500h11" strokeWidth="1.500" strokeDasharray="2 1" /><path d="M4 9.500h9" strokeWidth="1.500" />
                </svg>
            </ImeButton>
            <ImeButton>
                <svg width="14" height="16" viewBox="0 0 14 16" fill="#bcd5f6">
                    <circle cx="7" cy="4" r="3.500" /><path d="M1 15v-3q0-4 6-4t6 4v3z" />
                </svg>
            </ImeButton>
            <ImeButton>
                <svg width="16" height="14" viewBox="0 0 16 14" fill="currentColor">
                    <path d="M5 0q3 3 6 0l5 3l-2 4l-2-1v8h-8v-8l-2 1l-2-4z" />
                </svg>
            </ImeButton>
            <ImeButton>
                <svg width="16" height="16" viewBox="0 0 16 16" fill="none" stroke="currentColor" strokeWidth="2.500">
                    <path d="M8 1.500l2 2h3.500v3l1 1.500l-1 1.500v3h-3.500l-2 2l-2-2h-3.500v-3l-1-1.500l1-1.500v-3h3.500z" /><circle cx="8" cy="8" r="1.500" strokeWidth="1.500" />
                </svg>
            </ImeButton>
        </ImeBar>
    )
}

const INDEXES = [
    ['上证', '2824.53', '-51.87', '-1.80%', '1517亿'],
    ['深证', '9005.37', '-173.41', '-1.89%', '1768亿'],
    ['中小', '6240.22', '-112.26', '-1.77%', '698.1亿'],
    ['沪深', '3447.39', '-70.27', '-2.00%', '1075亿'],
    ['创业', '1541.86', '-19.40', '-1.24%', '527.3亿'],
];

function Status() {
    return (
        <StatusBar>
            {INDEXES.map(([name, value, change, percent, amount]) => (
                <IndexQuote key={name}>
                    <span>{name}</span>
                    <Fall>{value}</Fall>
                    <Fall>{change}</Fall>
                    <Fall>{percent}</Fall>
                    <Amount>{amount}</Amount>
                </IndexQuote>
            ))}
            <StatusCell $width={108}><span>总成交</span><span>3285亿</span></StatusCell>
            <StatusCell $width={300}>广州行情主站2</StatusCell>
            <StatusIcons viewBox="0 0 84 18">
                <path d="M1.500 3.500h13v11h-13z" fill="#fff" stroke="#777" /><path d="M3 6.500h10M3 9h10M3 11.500h10" stroke="#bbb" />
                <rect x="20" y="3" width="12" height="12" rx="4" fill="#d8c828" stroke="#8a7c10" /><path d="M26 4l3 4h-2v5h-2v-5h-2z" fill="#6a5c00" />
                <path d="M44 4v6l-3 6h7l-3-6v-6M40 1q-3 3 0 6M49 1q3 3 0 6M42 2q-1 2 0 4M47 2q1 2 0 4" fill="none" stroke="#808080" />
                <path d="M62 3l4 4h-8z" fill="#e00000" /><path d="M62 7l4 4h-8z" fill="#f0e000" /><path d="M62 11l4 4h-8z" fill="#008000" />
                <path d="M75 4v5M73.500 4h3v4h-3zM75 10v2M75 13v1" stroke="#808080" fill="#808080" />
            </StatusIcons>
        </StatusBar>
    )
}

export default function App() {
    return (
        <Screen>
            <GlobalStyle />
            <TopBar>
                <Logo viewBox="0 0 16 16">
                    <rect width="16" height="16" rx="1" fill="#d8292f" />
                    <path d="M0 0h16L9 7L0 8z" fill="#e87f7a" />
                    <path d="M1 3l4 4l2-1l6-5l1 1l-1 4l-3 1l-4 8q-1-5-4-8z" fill="#fbeeee" />
                </Logo>
                <Menu>
                    {['系统', '功能', '报价', '分析', '扩展市场行情', '资讯', '工具', '帮助'].map(name => (
                        <MenuItem key={name}>{name}</MenuItem>
                    ))}
                </Menu>
                <Badge>53</Badge>
                <Caption><span>通达信金融终端</span><span>西部创业</span></Caption>
                <TopButtons>
                    {['行情', '资讯', '交易', '服务'].map(name => <TopButton key={name}>{name}</TopButton>)}
                    {['M4 10h8', 'M6 6v-3h7v6h-3M3 7h7v5h-7z', 'M4 4l8 8M12 4l-8 8'].map((d, i) => (
                        <RoundButton key={d} aria-label={['最小化', '还原', '关闭'][i]}>
                            <svg width="16" height="16" viewBox="0 0 16 16"><path d={d} fill="none" stroke="#666" strokeWidth={i === 2 ? 3 : 2} /></svg>
                        </RoundButton>
                    ))}
                </TopButtons>
            </TopBar>
            <Main>
                <Charts />
                <Quotes />
            </Main>
            <Status />
            <Info />
            <DrawingTools />
            <Ime />
            <Watermark>178448.COM</Watermark>
        </Screen>
    )
}
